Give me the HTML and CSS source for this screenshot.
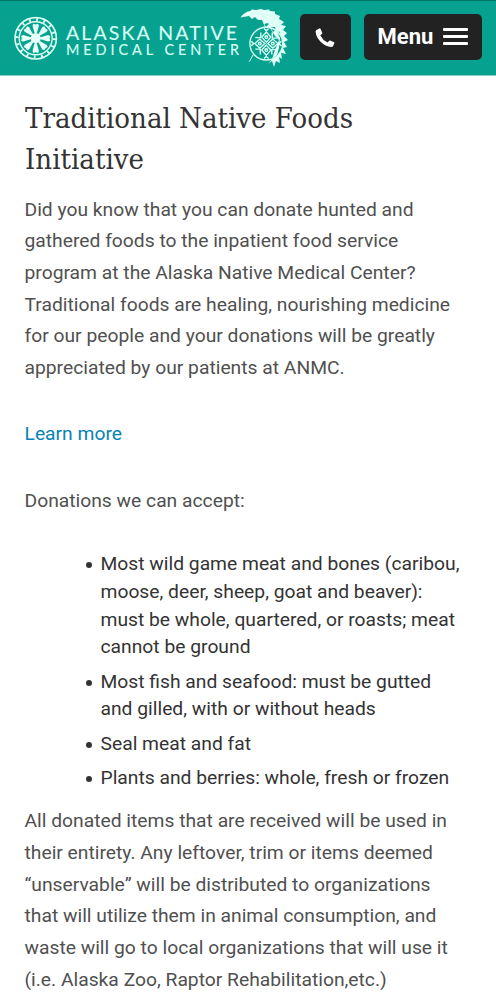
FILE: index.html
```html
<!DOCTYPE html>
<html lang="en">
<head>
<meta charset="utf-8">
<title>Traditional Native Foods Initiative</title>
<link rel="stylesheet" href="styles.css">
</head>
<body>
<header class="header">
  <svg class="logo" viewBox="0 0 300 76" role="img" aria-label="Alaska Native Medical Center">
    <defs>
      <path id="petal" d="M-.8-4L-3.2-12.5L-2.4-14.6L0-13.9L2.4-14.6L3.2-12.5L.8-4Z"/>
      <g id="motif"><path d="M0-1.5L-4.5-6.5L0-11.5L4.5-6.5Z"/><circle cy="-6.5" r="1.3"/><path d="M-2.3-15L0-12.8L2.3-15"/></g>
      <path id="corner" d="M5.5 11V6H11"/>
    </defs>
    <g transform="translate(35.7 38.3)" fill="none" stroke="#d9fff5">
      <circle r="20.7" stroke-width="1.6"/>
      <circle r="16.5" stroke-width="1.4"/>
      <circle r="18.7" stroke-width="3" stroke-dasharray="1.8 5.54"/>
      <g fill="#e5fff9" stroke="none">
        <use href="#petal"/><use href="#petal" transform="rotate(45)"/><use href="#petal" transform="rotate(90)"/><use href="#petal" transform="rotate(135)"/>
        <use href="#petal" transform="rotate(180)"/><use href="#petal" transform="rotate(225)"/><use href="#petal" transform="rotate(270)"/><use href="#petal" transform="rotate(315)"/>
        <circle r="5"/>
      </g>
    </g>
    <g class="wordmark">
      <text class="name-top" x="66" y="40" textLength="171">ALASKA NATIVE</text>
      <text class="name-bottom" x="66" y="55.3" textLength="173">MEDICAL CENTER</text>
    </g>
    <g fill="#dffff7">
      <path d="M240.5 17.5Q244 12 250 11L252 9.5L256 10L261 9L264 10L269 9.5L270 11L275 11.5L275 14L280 16L279 19L284 22L281 25L286 26L283 30L287 33L284 36L288 40L284 42L287 47L283 48L286 54L281 53L282 59L279 57L280 63L276 61L274 67L272 61L268 64L274 57L277 55L275 52L281 49L278 45L282 41L279 37L280 32L276 31L275 27L270 27L268 23L264 24L262 20L258 20L255 17L252 19L249 16Z"/>
    </g>
    <g transform="translate(266.3 43.6)" fill="none" stroke="#d5fff3" stroke-width="1.4">
      <circle r="16.4" fill="#07a18f"/>
      <use href="#motif"/><use href="#motif" transform="rotate(90)"/><use href="#motif" transform="rotate(180)"/><use href="#motif" transform="rotate(270)"/>
      <use href="#corner"/><use href="#corner" transform="rotate(90)"/><use href="#corner" transform="rotate(180)"/><use href="#corner" transform="rotate(270)"/>
      <path d="M-13 11L-17 18" stroke-width="1"/>
    </g>
    <path d="M262 20L266 27L269 24L273 32L276 29L280 38L279 48L277 55L272 59L275 50L279 40L275 36L270 28L265 27Z" fill="#dffff7"/>
  </svg>
  <a class="button call" href="#" aria-label="Call">
    <svg class="phone" viewBox="0 0 20 20"><path d="M1.4 2.1L4.4.4Q5.1.1 5.5.8L7.2 4.7Q7.5 5.4 6.9 5.9L5.2 7.2Q7.6 12 12.5 14.6L14 12.9Q14.5 12.3 15.2 12.6L19 14.2Q19.7 14.6 19.4 15.3L17.9 18.3Q17.5 19 16.5 19Q10.3 18.6 5.6 13.8Q.9 9.2.6 3.6Q.6 2.6 1.4 2.1Z"/></svg>
  </a>
  <button class="button menu" type="button"><span>Menu</span><span class="bars"><i></i><i></i><i></i></span></button>
</header>
<main class="content">
  <h1 class="title">Traditional Native Foods<br>Initiative</h1>
  <p class="copy">Did you know that you can donate hunted and<br>gathered foods to the inpatient food service<br>program at the Alaska Native Medical Center?<br>Traditional foods are healing, nourishing medicine<br>for our people and your donations will be greatly<br>appreciated by our patients at ANMC.</p>
  <p class="copy"><a class="link" href="#">Learn more</a></p>
  <p class="copy">Donations we can accept:</p>
  <ul class="donations">
    <li>Most wild game meat and bones (caribou,<br>moose, deer, sheep, goat and beaver):<br>must be whole, quartered, or roasts; meat<br>cannot be ground</li>
    <li>Most fish and seafood: must be gutted<br>and gilled, with or without heads</li>
    <li>Seal meat and fat</li>
    <li>Plants and berries: whole, fresh or frozen</li>
  </ul>
  <p class="copy">All donated items that are received will be used in<br>their entirety. Any leftover, trim or items deemed<br>“unservable” will be distributed to organizations<br>that will utilize them in animal consumption, and<br>waste will go to local organizations that will use it<br>(i.e. Alaska Zoo, Raptor Rehabilitation,etc.)</p>
</main>
</body>
</html>
```
FILE: styles.css
```css
* { box-sizing: border-box; }
body {
  margin: 0;
  background: #fff;
  font-family: Roboto, "Liberation Sans", sans-serif;
  white-space: nowrap;
  overflow: hidden;
}
.header {
  display: flex;
  align-items: flex-start;
  height: 76px;
  background: #07a18f;
  border-top: 1px solid #087466;
  border-bottom: 1px solid #82cfc5;
}
.logo { width: 300px; height: 76px; margin-top: -1px; flex: none; }
.wordmark {
  fill: #d5fff5;
  stroke: #d5fff5;
  stroke-width: .15px;
  font-family: Lato, sans-serif;
}
.name-top { font-size: 19.5px; }
.name-bottom { font-size: 14.4px; }
.button {
  display: flex;
  align-items: center;
  justify-content: center;
  height: 46px;
  margin-top: 13px;
  border: 0;
  border-radius: 5px;
  background: #222;
  color: #fff;
}
.call { width: 51px; }
.phone { width: 20px; height: 20px; fill: #fff; margin: 2px 1px 0 0; }
.menu {
  width: 118px;
  margin-left: 13px;
  padding: 0 0 1px;
  gap: 10px;
  font: 700 22px Roboto, sans-serif;
}
.bars { display: grid; gap: 4px; }
.bars i { width: 25px; height: 3px; border-radius: 1px; background: #fff; }
.content { padding: 21.5px 24.5px 0; }
.title {
  margin: 0 0 13px;
  color: #333;
  font: 400 27px/41.5px "DejaVu Serif", serif;
  transform: scaleX(.967);
  transform-origin: left;
}
.copy {
  margin: 0 0 34.6px;
  color: #505050;
  font-size: 19.27px;
  line-height: 31.7px;
}
.link { color: #0683b5; text-decoration: none; }
.donations {
  margin: -.5px 0 13.5px;
  padding: 0 0 0 76px;
  color: #333;
  font-size: 19.27px;
  line-height: 27.6px;
  list-style: none;
}
.donations li { position: relative; margin-bottom: 6.9px; }
.donations li::before {
  content: "";
  position: absolute;
  left: -15px;
  top: 12px;
  width: 6px;
  height: 6px;
  border-radius: 50%;
  background: #333;
}
```
